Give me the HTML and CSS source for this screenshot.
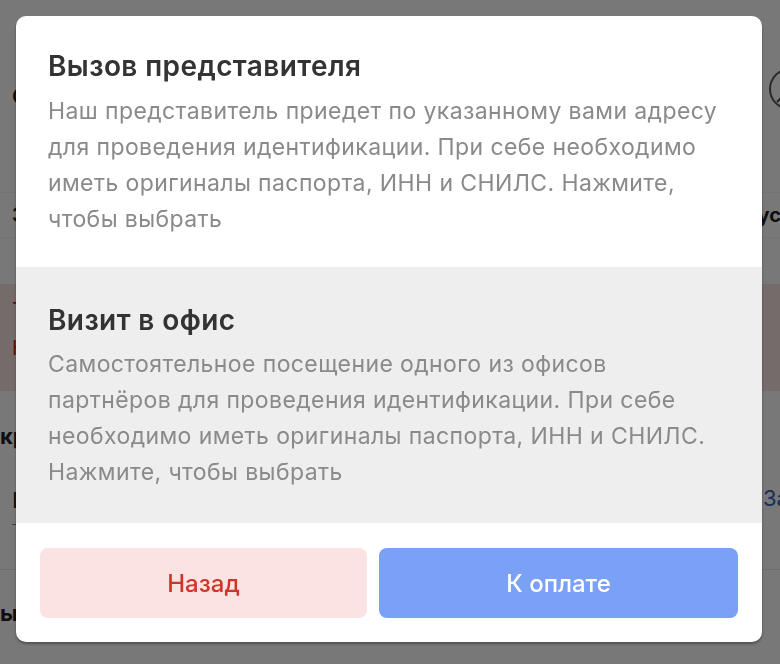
FILE: index.html
```html
<!DOCTYPE html>
<html lang="ru">
<head>
    <meta charset="UTF-8">
    <meta name="viewport" content="width=device-width, initial-scale=1.0">
    <title>Способ идентификации</title>
    <link rel="stylesheet" href="styles.css">
</head>
<body>
    <div class="page">
        <header class="topbar">
            <span class="topbar-title">Оформление покупки</span>
            <svg class="avatar" width="44" height="44" viewBox="0 0 44 44">
                <circle cx="22" cy="22" r="20" fill="none" stroke="#555" stroke-width="2"/>
                <path d="M9 35 L35 9" stroke="#555" stroke-width="2"/>
            </svg>
        </header>
        <div class="status-row">
            <span>Заказ №10482</span>
            <span class="status">Статус</span>
        </div>
        <div class="alert">
            <p class="alert-title">Требуется идентификация</p>
            <p>Необходимо подтвердить личность</p>
        </div>
        <h2 class="page-title">кредит покупки</h2>
        <div class="field">
            <span class="field-input">Иванов Иван</span>
            <a class="field-link" href="#">Задать</a>
        </div>
        <h2 class="page-title page-title-last">ы оплаты</h2>
    </div>

    <div class="overlay">
        <div class="modal">
            <div class="option">
                <h3 class="option-title">Вызов представителя</h3>
                <p class="option-text">Наш представитель приедет по указанному вами адресу для проведения идентификации. При себе необходимо иметь оригиналы паспорта, ИНН и СНИЛС. Нажмите, чтобы выбрать</p>
            </div>
            <div class="option option-active">
                <h3 class="option-title">Визит в офис</h3>
                <p class="option-text">Самостоятельное посещение одного из офисов партнёров для проведения идентификации. При себе необходимо иметь оригиналы паспорта, ИНН и СНИЛС. Нажмите, чтобы выбрать</p>
            </div>
            <div class="modal-actions">
                <button class="btn btn-back">Назад</button>
                <button class="btn btn-pay">К оплате</button>
            </div>
        </div>
    </div>
</body>
</html>
```

FILE: styles.css
```css
body {
    margin: 0;
    overflow: hidden;
    font-family: Inter, "Noto Sans", sans-serif;
    background: #fff;
    color: #222;
}
.page {
    width: 850px;
}
.topbar {
    display: flex;
    justify-content: space-between;
    align-items: center;
    height: 193px;
    padding: 0 38px 0 12px;
    border-bottom: 1px solid #f2f2f2;
    box-sizing: border-box;
}
.topbar-title {
    font-size: 22px;
    font-weight: 600;
}
.avatar {
    margin-bottom: 14px;
}
.status-row {
    display: flex;
    justify-content: space-between;
    align-items: center;
    height: 44px;
    padding: 0 69px 0 12px;
    border-bottom: 1px solid #f2f2f2;
    font-size: 20px;
    font-weight: 700;
}
.alert {
    margin-top: 46px;
    height: 107px;
    padding: 14px 12px;
    box-sizing: border-box;
    background: #fbe4e4;
    color: #c8231b;
    font-size: 20px;
}
.alert p {
    margin: 0 0 14px;
}
.page-title {
    margin: 0;
    padding: 32px 12px 0 0;
    font-size: 22px;
    font-weight: 700;
}
.field {
    display: flex;
    align-items: flex-end;
    gap: 10px;
    margin: 36px 12px 0 12px;
    font-size: 22px;
}
.field-input {
    flex: 1;
    padding-bottom: 11px;
    border-bottom: 1px solid #888;
}
.field-link {
    color: #2c64c4;
    text-decoration: none;
    padding-bottom: 14px;
}
.page-title-last {
    margin-top: 44px;
    border-top: 1px solid #e6e6e6;
    padding-top: 30px;
}

.overlay {
    position: fixed;
    inset: 0;
    background: rgba(0, 0, 0, 0.53);
    display: flex;
    align-items: flex-start;
    padding: 16px 18px 16px 16px;
}
.modal {
    width: 100%;
    background: #fff;
    border-radius: 10px;
    overflow: hidden;
    box-shadow: 0 2px 3px rgba(0, 0, 0, 0.35);
}
.option {
    padding: 32px 36px 30px 32px;
}
.option-active {
    background: #eeeeee;
    padding-top: 35px;
    padding-bottom: 33px;
}
.option-title {
    margin: 0 0 9px;
    font-size: 28px;
    line-height: 36px;
    font-weight: 600;
    letter-spacing: 0.4px;
    color: #333;
}
.option-active .option-title {
    margin-bottom: 8px;
}
.option-text {
    margin: 0;
    font-size: 23px;
    line-height: 36px;
    letter-spacing: 0.4px;
    color: #8a8a8a;
}
.modal-actions {
    display: flex;
    gap: 12px;
    padding: 25px 24px 24px;
}
.btn {
    flex: auto;
    height: 70px;
    border: 0;
    border-radius: 8px;
    font-family: inherit;
    font-size: 24px;
    font-weight: 500;
}
.btn-back {
    background: #fbe3e3;
    color: #d0352a;
}
.btn-pay {
    background: #7aa1f6;
    color: #fff;
}
```
